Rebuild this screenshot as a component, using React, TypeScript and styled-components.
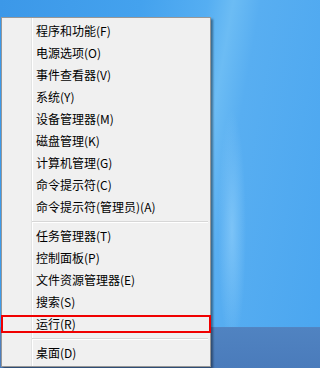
import React from 'react'
import styled, { createGlobalStyle } from 'styled-components'

type Entry = { label: string } | 'sep'

const entries: Entry[] = [
  { label: '程序和功能(F)' },
  { label: '电源选项(O)' },
  { label: '事件查看器(V)' },
  { label: '系统(Y)' },
  { label: '设备管理器(M)' },
  { label: '磁盘管理(K)' },
  { label: '计算机管理(G)' },
  { label: '命令提示符(C)' },
  { label: '命令提示符(管理员)(A)' },
  'sep',
  { label: '任务管理器(T)' },
  { label: '控制面板(P)' },
  { label: '文件资源管理器(E)' },
  { label: '搜索(S)' },
  { label: '运行(R)' },
  'sep',
  { label: '桌面(D)' },
]

const GlobalStyle = createGlobalStyle`
  html, body {
    margin: 0;
    padding: 0;
    overflow: hidden;
    background: #4aa6f0;
  }
`

const App: React.FC = () => (
  <>
    <GlobalStyle />
    <Desktop>
      <Menu>
        {entries.map((entry, i) =>
          entry === 'sep' ? (
            <Separator key={i} />
          ) : (
            <Item key={i} $marked={entry.label === '运行(R)'}>
              {entry.label}
            </Item>
          ),
        )}
      </Menu>
    </Desktop>
  </>
)

const Desktop = styled.div`
  width: 100%;
  min-width: 257px;
  height: 368px;
  box-sizing: border-box;
  padding: 17px 0 0 1px;
  background:
    linear-gradient(to bottom, transparent 327px, #5487c4 327px, #5083c1 328px, #4a7bbb 100%),
    radial-gradient(ellipse 14px 120px at 232px 230px, rgba(140, 205, 250, 0.7), rgba(140, 205, 250, 0) 100%),
    linear-gradient(100deg, #3c98e8 0px, #44a2ee 140px, #55aef2 205px, #6cbcf4 230px, #58aef1 257px, #4aa6f0 100%);
`

const Menu = styled.div`
  width: 210px;
  box-sizing: border-box;
  padding: 2px 0;
  background-color: #f0f0f0;
  background-image: linear-gradient(
    to right,
    transparent 29px,
    #e2e3e3 29px,
    #e2e3e3 30px,
    #ffffff 30px,
    #ffffff 31px,
    transparent 31px
  );
  border: 1px solid #979797;
  box-shadow: 2px 2px 2px rgba(0, 0, 0, 0.4);
  font-family: 'Noto Sans CJK SC', 'Noto Sans', sans-serif;
  font-size: 12px;
  color: #000;
`

const Item = styled.div<{ $marked?: boolean }>`
  position: relative;
  height: 22px;
  line-height: 22px;
  padding-left: 34px;
  white-space: nowrap;

  ${({ $marked }) =>
    $marked &&
    `
    &::after {
      content: '';
      position: absolute;
      top: 2px;
      bottom: 2px;
      left: -1px;
      right: -1px;
      border: 2px solid #f00000;
    }
  `}
`

const Separator = styled.div`
  height: 7px;
  margin: 0 2px 0 30px;
  background: linear-gradient(
    to bottom,
    transparent 3px,
    #d7d7d7 3px,
    #d7d7d7 4px,
    #ffffff 4px,
    #ffffff 5px,
    transparent 5px
  );
`

export default App
